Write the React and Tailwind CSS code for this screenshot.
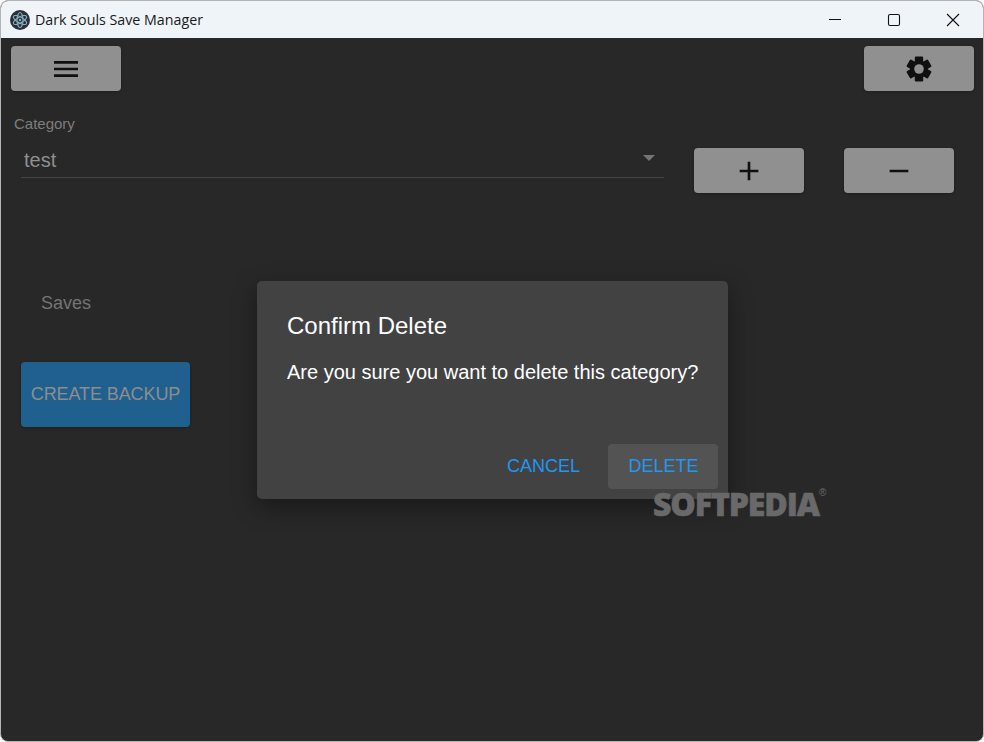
import React from "react";

const GrayButton = ({ className = "", children }) => (
  <button className={`w-[110px] h-[45px] flex items-center justify-center rounded-[4px] bg-[#909090] text-[#101010] shadow-[0_1px_3px_rgba(0,0,0,0.25)] ${className}`}>
    {children}
  </button>
);

const MaterialIcon = ({ d, size = 32 }) => (
  <svg width={size} height={size} viewBox="0 0 24 24" fill="currentColor">
    <path d={d} />
  </svg>
);

const GearIcon = () => (
  <svg width="26" height="26" viewBox="0 0 26 26" fill="currentColor">
    <rect x="8.8" y="0.6" width="8.4" height="24.8" rx="1.2" />
    <rect x="8.8" y="0.6" width="8.4" height="24.8" rx="1.2" transform="rotate(60 13 13)" />
    <rect x="8.8" y="0.6" width="8.4" height="24.8" rx="1.2" transform="rotate(120 13 13)" />
    <circle cx="13" cy="13" r="8.8" />
    <circle cx="13" cy="13" r="4.8" fill="#909090" />
  </svg>
);

const ElectronLogo = () => (
  <svg width="20" height="20" viewBox="0 0 20 20" fill="none">
    <circle cx="10" cy="10" r="10" fill="#2b2f3a" />
    <g stroke="#86aebd" strokeWidth="1.1">
      <ellipse cx="10" cy="10" rx="7.5" ry="3" transform="rotate(30 10 10)" />
      <ellipse cx="10" cy="10" rx="7.5" ry="3" transform="rotate(90 10 10)" />
      <ellipse cx="10" cy="10" rx="7.5" ry="3" transform="rotate(150 10 10)" />
    </g>
    <circle cx="10" cy="10" r="1.2" fill="#86aebd" />
  </svg>
);

const App = () => {
  return (
    <div className="relative w-[984px] h-[742px] overflow-hidden bg-white font-['Liberation_Sans',sans-serif]">
      <div className="w-full h-full flex flex-col rounded-[8px] border border-[#b4b4b4] overflow-hidden bg-[#282828]">
        {/* title bar */}
        <div className="h-[37px] shrink-0 flex items-center bg-[#eff4f9] pl-[9px]">
          <ElectronLogo />
          <span className="ml-[5px] text-[14.25px] text-[#1a1a1a] font-['Open_Sans',sans-serif]">Dark Souls Save Manager</span>
          <div className="ml-auto flex items-center pr-[1px] text-[#111111]">
            <div className="w-[58px] flex justify-center">
              <svg width="14" height="14" viewBox="0 0 14 14" stroke="currentColor" strokeWidth="1"><path d="M1 6.5h12" /></svg>
            </div>
            <div className="w-[59px] flex justify-center">
              <svg width="14" height="14" viewBox="0 0 14 14" fill="none" stroke="currentColor" strokeWidth="1.1"><rect x="1.5" y="1.5" width="11" height="11" rx="1.5" /></svg>
            </div>
            <div className="w-[59px] flex justify-center">
              <svg width="14" height="14" viewBox="0 0 14 14" stroke="currentColor" strokeWidth="1.1"><path d="M1 1l12 12M13 1L1 13" /></svg>
            </div>
          </div>
        </div>

        {/* toolbar */}
        <div className="flex justify-between pt-[8px] pl-[10px] pr-[9px]">
          <GrayButton>
            <MaterialIcon d="M3 18h18v-2H3v2zm0-5h18v-2H3v2zm0-7v2h18V6H3z" />
          </GrayButton>
          <GrayButton>
            <GearIcon />
          </GrayButton>
        </div>

        {/* category row */}
        <div className="flex pl-[13px] mt-[24px]">
          <div className="w-[650px]">
            <div className="text-[15px] leading-[18px] text-[#7d7d7d]">Category</div>
            <div className="ml-[7px] mt-[10px] h-[35px] w-[643px] flex items-center justify-between border-b border-[#444444] pl-[3px] pr-[9px] pb-[1px]">
              <span className="text-[20px] text-[#8f8f8f]">test</span>
              <svg width="12" height="6" viewBox="0 0 12 6" fill="#757575" className="mb-[3px]"><path d="M0 0h12L6 6z" /></svg>
            </div>
          </div>
          <div className="flex gap-[40px] ml-[30px] mt-[33px]">
            <GrayButton>
              <MaterialIcon d="M19 13h-6v6h-2v-6H5v-2h6V5h2v6h6v2z" />
            </GrayButton>
            <GrayButton>
              <MaterialIcon d="M19 13H5v-2h14v2z" />
            </GrayButton>
          </div>
        </div>

        {/* saves */}
        <div className="ml-[40px] mt-[99px] text-[18px] leading-[22px] text-[#747474]">Saves</div>
        <button className="ml-[20px] mt-[48px] w-[169px] h-[65px] rounded-[4px] bg-[#20608f] text-[18px] tracking-[-0.1px] text-[#8d8d8d] shadow-[0_1px_3px_rgba(0,0,0,0.25)]">
          CREATE BACKUP
        </button>
      </div>

      {/* confirm dialog */}
      <div className="absolute left-[257px] top-[281px] w-[471px] h-[218px] flex flex-col rounded-[5px] bg-[#424242] shadow-[0_8px_24px_rgba(0,0,0,0.4)]">
        <div className="pl-[30px] pt-[30px] text-[24px] leading-[30px] text-white">Confirm Delete</div>
        <div className="pl-[30px] pt-[16px] text-[20px] leading-[30px] text-white">Are you sure you want to delete this category?</div>
        <div className="mt-auto flex justify-end items-center gap-[15px] pr-[10px] pb-[10px]">
          <button className="w-[100px] h-[45px] pl-px rounded-[4px] text-[18px] text-[#2196f3]">CANCEL</button>
          <button className="w-[110px] h-[45px] pl-px rounded-[4px] bg-[#535353] text-[18px] text-[#2196f3]">DELETE</button>
        </div>
      </div>

      {/* watermark */}
      <div className="absolute left-[653px] top-[485px] flex items-start text-[#696969]">
        <span className="text-[32px] leading-[38px] font-extrabold tracking-[-1.1px] [-webkit-text-stroke:0.6px_#696969] font-['Open_Sans',sans-serif]">SOFTPEDIA</span>
        <span className="text-[10px] leading-[10px] mt-[3px]">®</span>
      </div>
    </div>
  );
};

export default App;
